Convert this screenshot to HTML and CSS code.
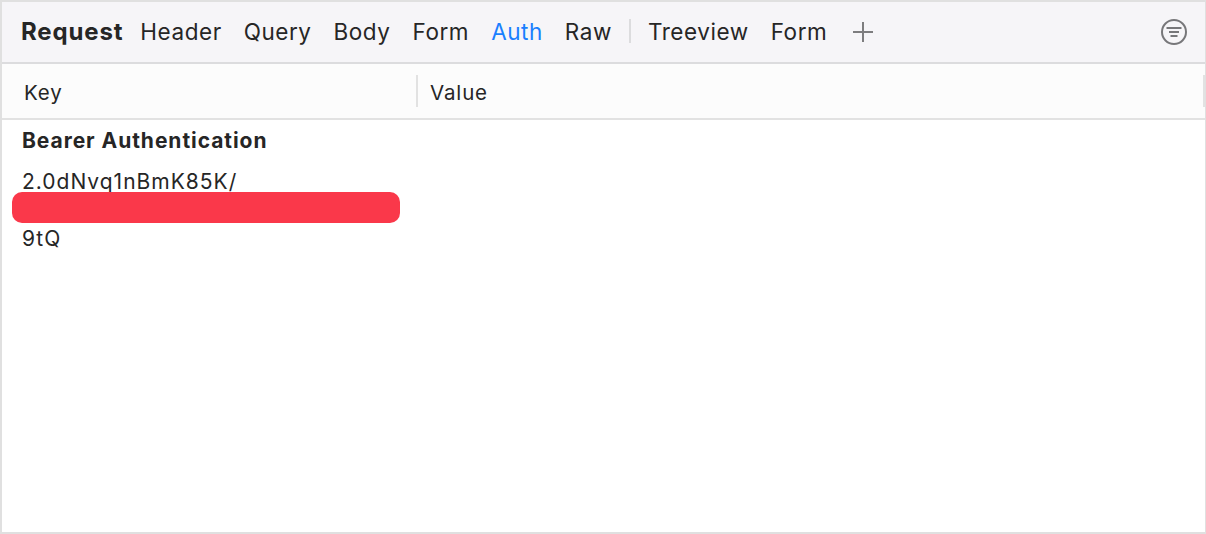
FILE: index.html
```html
<!DOCTYPE html>
<html lang="en">
<head>
    <meta charset="UTF-8">
    <title>Request</title>
    <link rel="stylesheet" href="styles.css">
</head>
<body>
    <div class="panel">
        <div class="toolbar">
            <span class="title">Request</span>
            <div class="tabs">
                <span class="tab">Header</span>
                <span class="tab">Query</span>
                <span class="tab">Body</span>
                <span class="tab">Form</span>
                <span class="tab active">Auth</span>
                <span class="tab">Raw</span>
                <span class="divider"></span>
                <span class="tab">Treeview</span>
                <span class="tab">Form</span>
                <svg class="plus" width="22" height="22" viewBox="0 0 22 22">
                    <path d="M11 1v20M1 11h20" stroke="#7d7d7f" stroke-width="2" fill="none"/>
                </svg>
            </div>
            <svg class="filter" width="28" height="28" viewBox="0 0 28 28">
                <circle cx="14" cy="14" r="12" stroke="#77777a" stroke-width="2" fill="none"/>
                <path d="M6.5 10h15M9 14h10M10.500 18h7" stroke="#77777a" stroke-width="2" fill="none"/>
            </svg>
        </div>
        <div class="table-head">
            <div class="col col-key">Key</div>
            <div class="col col-value">Value</div>
        </div>
        <div class="content">
            <div class="heading">Bearer Authentication</div>
            <div class="token">
                <div class="line">2.0dNvq1nBmK85K/</div>
                <div class="line">&nbsp;</div>
                <div class="line">9tQ</div>
                <div class="redact"></div>
            </div>
        </div>
    </div>
</body>
</html>
```

FILE: styles.css
```css
* {
    box-sizing: border-box;
}

html, body {
    height: 100%;
}

body {
    margin: 0;
    font-family: "Inter", "Liberation Sans", sans-serif;
    color: #262626;
    background: #fff;
    overflow: hidden;
}

.panel {
    height: 534px;
    display: flex;
    flex-direction: column;
    border: 2px solid #e0e0e0;
    border-right-width: 1px;
}

.toolbar {
    height: 62px;
    flex-shrink: 0;
    display: flex;
    align-items: center;
    padding: 0 17px 2px 19px;
    background: #f6f5f8;
    border-bottom: 2px solid #dcdcde;
}

.title {
    font-size: 24px;
    font-weight: 700;
    letter-spacing: 0.85px;
    margin-right: 17px;
}

.tabs {
    display: flex;
    align-items: center;
    gap: 22px;
    flex: 1;
}

.tab {
    font-size: 22.500px;
    letter-spacing: 0.55px;
}

.tab.active {
    color: #1a7fff;
}

.divider {
    width: 2px;
    height: 24px;
    background: #dcdcde;
    margin: 0 -5.500px 0 -4.500px;
}

.plus {
    margin: 2px 0 0 3px;
}

.filter {
    margin-top: 2px;
}

.table-head {
    height: 56px;
    flex-shrink: 0;
    display: flex;
    align-items: center;
    background: #fcfcfc;
    border-bottom: 2px solid #e2e2e2;
}

.col {
    height: 32px;
    display: flex;
    align-items: center;
    padding-top: 2px;
    font-size: 20.500px;
    letter-spacing: 0.85px;
}

.col-key {
    width: 416px;
    padding-left: 22px;
    border-right: 2px solid #e2e2e2;
}

.col-value {
    flex: 1;
    padding-left: 12px;
    border-right: 2px solid #e2e2e2;
}

.content {
    flex: 1;
    padding: 7px 20px;
}

.heading {
    font-size: 21px;
    font-weight: 700;
    letter-spacing: 0.95px;
    line-height: 28px;
    margin-bottom: 13px;
}

.token {
    position: relative;
    font-size: 21px;
    letter-spacing: 1px;
    line-height: 28.500px;
}

.redact {
    position: absolute;
    left: -10px;
    top: 24px;
    width: 388px;
    height: 31px;
    background: #fa384a;
    border-radius: 10px;
}
```
